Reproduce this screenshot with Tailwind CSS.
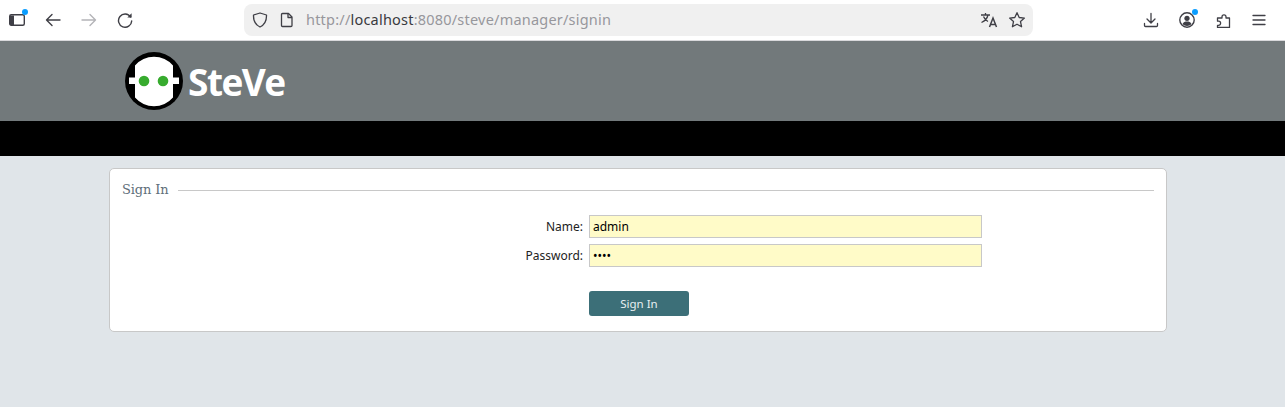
<!DOCTYPE html>
<html lang="en">
<head>
  <meta charset="UTF-8" />
  <title>SteVe - Sign In</title>
  <script src="https://cdn.jsdelivr.net/npm/@tailwindcss/browser@4"></script>
</head>
<body class="h-[407px] overflow-hidden bg-[#e0e5e9] font-['Noto_Sans',sans-serif]">
  <!-- Browser toolbar -->
  <div class="h-[41px] bg-white border-b border-[#d9d9dc] flex items-center text-[#3f3f46]">
    <div class="w-[244px] shrink-0 flex items-center pl-[9px] gap-[20px]">
      <span class="relative w-[16px] h-[16px] block">
        <svg width="16" height="16" viewBox="0 0 16 16" fill="none" stroke="currentColor" stroke-width="1.4"><rect x="0.7" y="2.7" width="14.6" height="10.6" rx="1.5"/><path d="M1 3.500h4v9.500H1z" fill="currentColor" stroke="none"/></svg>
        <span class="absolute -top-[3px] -right-[3px] w-[6px] h-[6px] rounded-full bg-[#0a9dff]"></span>
      </span>
      <svg width="16" height="16" viewBox="0 0 16 16" fill="none" stroke="currentColor" stroke-width="1.4" stroke-linecap="round" stroke-linejoin="round"><path d="M15 8H1.500M7 2.500 1.500 8 7 13.500"/></svg>
      <svg width="16" height="16" viewBox="0 0 16 16" fill="none" stroke="#b4b4b8" stroke-width="1.4" stroke-linecap="round" stroke-linejoin="round"><path d="M1 8h13.500M9 2.500 14.500 8 9 13.500"/></svg>
      <svg width="16" height="16" viewBox="0 0 16 16" fill="none" stroke="currentColor" stroke-width="1.4" stroke-linecap="round" stroke-linejoin="round"><path d="M13.600 5A6.600 6.600 0 1 0 14.700 9"/><path d="M14.600 1.200v4.300h-4.300z" fill="currentColor" stroke="none"/></svg>
    </div>
    <div class="w-[789px] h-[32px] shrink-0 rounded-[8px] bg-[#f0f0f0] flex items-center pl-[8px] pr-[7px] text-[14.5px] tracking-[0.21px]">
      <svg class="mr-[12px]" width="16" height="16" viewBox="0 0 16 16" fill="none" stroke="currentColor" stroke-width="1.3" stroke-linejoin="round"><path d="M8 1 14.500 3c.2 5.500-1.800 9.800-6.500 12C3.300 12.800 1.300 8.500 1.500 3z"/></svg>
      <svg class="mr-[12px]" width="14" height="16" viewBox="0 0 14 16" fill="none" stroke="currentColor" stroke-width="1.3" stroke-linejoin="round"><path d="M2.500 1.500h6l3.500 3.500v8.500a1 1 0 0 1-1 1H2.500a1 1 0 0 1-1-1v-11a1 1 0 0 1 1-1z"/><path d="M8 1.500V5.500h4" /></svg>
      <span class="text-[#97979c]">http://<span class="text-[#3a3a3e]">localhost</span>:8080/steve/manager/signin</span>
      <svg class="ml-auto mr-[10px]" width="18" height="18" viewBox="0 0 18 18" fill="none" stroke="currentColor" stroke-width="1.3"><path d="M1 4h9M5.500 2v2M8 4c-.8 3.500-3 6-6.500 7.500M3.500 5.500c1 2.500 2.500 4 4.500 5"/><path d="M9.500 16l3.500-9 3.500 9M10.700 13.500h4.600" stroke-width="1.5"/></svg>
      <svg width="18" height="18" viewBox="0 0 18 18" fill="none" stroke="currentColor" stroke-width="1.3" stroke-linejoin="round"><path d="m9 1.700 2.200 4.800 5.200.6-3.900 3.500 1.100 5.200L9 13.200l-4.600 2.600 1.100-5.200-3.900-3.500 5.200-.6z"/></svg>
    </div>
    <div class="flex-1 flex items-center pl-[110px] gap-[20px]">
      <svg width="16" height="16" viewBox="0 0 16 16" fill="none" stroke="currentColor" stroke-width="1.3" stroke-linecap="round" stroke-linejoin="round"><path d="M8 1.500v9M4 7l4 4 4-4M1.500 11.500v2a1 1 0 0 0 1 1h11a1 1 0 0 0 1-1v-2"/></svg>
      <span class="relative w-[16px] h-[16px] block">
        <svg width="16" height="16" viewBox="0 0 16 16"><circle cx="8" cy="8" r="7.200" fill="none" stroke="currentColor" stroke-width="1.400"/><circle cx="8" cy="6.300" r="2.600" fill="currentColor"/><path d="M3.500 12c1-2 2.500-2.500 4.500-2.500s3.500.5 4.500 2.500c-1 1.300-2.800 2-4.500 2s-3.500-.7-4.500-2z" fill="currentColor"/></svg>
        <span class="absolute -top-[3px] -right-[3px] w-[6px] h-[6px] rounded-full bg-[#0a9dff]"></span>
      </span>
      <svg width="16" height="16" viewBox="0 0 16 16" fill="none" stroke="currentColor" stroke-width="1.3" stroke-linejoin="round"><path d="M2.500 15.500H14.500V6H11V4.800a2 2 0 0 0-4 0V6H2.500V9.200H3.500a2 2 0 0 1 0 4.200H2.500Z"/></svg>
      <svg width="16" height="16" viewBox="0 0 16 16" fill="none" stroke="currentColor" stroke-width="1.3" stroke-linecap="round"><path d="M2 3.500h12M2 8h12M2 12.500h12"/></svg>
    </div>
  </div>

  <!-- Header -->
  <div class="h-[80px] bg-[#72797b] pl-[125px] pt-[11px]">
    <div class="flex items-center h-[58px]">
      <svg width="58" height="58" viewBox="0 0 58 58">
        <circle cx="29" cy="29" r="29" fill="#000"/>
        <path d="M10 13.500A25 25 0 0 1 48 13.500V25.500H54V32H48V45.500A25 25 0 0 1 10 45.500V32H4V25.500H10Z" fill="#fff"/>
        <circle cx="19" cy="29" r="5.300" fill="#37ab2e"/>
        <circle cx="38" cy="29" r="5.300" fill="#37ab2e"/>
      </svg>
      <span class="ml-[5px] text-white font-['Open_Sans',sans-serif] font-bold text-[37px] leading-none tracking-[-1.5px]">SteVe</span>
    </div>
  </div>
  <div class="h-[35px] bg-black"></div>

  <!-- Sign in card -->
  <div class="mt-[12px] ml-[109px] w-[1058px] h-[164px] bg-white border border-[#c8c8c8] rounded-[5px] px-[12px]">
    <div class="flex items-center h-[42px]">
      <span class="font-['DejaVu_Serif',serif] text-[13px] tracking-[-0.15px] text-[#5f6f7a] pr-[10px]">Sign In</span>
      <span class="flex-1 h-px bg-[#c8c8c8]"></span>
    </div>
    <form class="mt-[4px] grid grid-cols-[461px_393px] gap-x-[6px] gap-y-[6px] items-center text-[12px] text-[#222]">
      <label class="text-right">Name:</label>
      <input class="h-[23px] border border-[#c8c8c8] bg-[#fffbc8] px-[3px] text-black text-[12px]" type="text" value="admin" />
      <label class="text-right">Password:</label>
      <input class="h-[23px] border border-[#c8c8c8] bg-[#fffbc8] px-[3px] text-black text-[12px]" type="password" value="1234" />
      <span></span>
      <button class="mt-[18px] w-[100px] h-[25px] rounded-[3px] bg-[#3c6f78] text-[#e8f0f2] text-[11.5px]" type="submit">Sign In</button>
    </form>
  </div>
</body>
</html>
